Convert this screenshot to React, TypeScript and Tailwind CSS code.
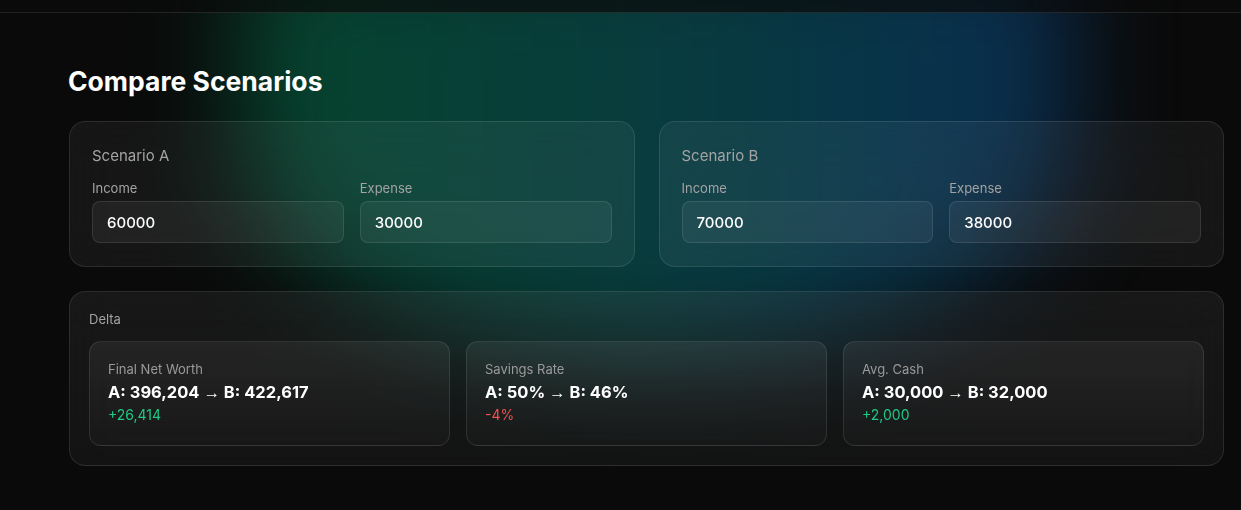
import React from 'react';

/* ── Scenario card ── */
function ScenarioCard({ title, income, expense }: { title: string; income: string; expense: string }) {
  return (
    <div className="rounded-2xl border border-white/10 bg-white/[0.05] backdrop-blur-xl px-[22px] py-[23px]">
      <p className="text-[15px] leading-[22px] text-[#a3a3a3]">{title}</p>
      <div className="mt-3 grid grid-cols-2 gap-4">
        <Field label="Income" value={income} />
        <Field label="Expense" value={expense} />
      </div>
    </div>
  );
}

function Field({ label, value }: { label: string; value: string }) {
  return (
    <label className="block">
      <span className="block text-[13px] leading-[18px] text-[#a3a3a3]">{label}</span>
      <input
        readOnly
        value={value}
        className="mt-1 h-[42px] w-full rounded-lg border border-white/10 bg-white/[0.05] px-[14px] text-[15px] font-medium text-white outline-none"
      />
    </label>
  );
}

/* ── Delta stat ── */
function DeltaStat({ a, b, title, delta, positive }: {
  a: string; b: string; title: string; delta: string; positive: boolean;
}) {
  return (
    <div className="rounded-xl border border-white/10 bg-gradient-to-b from-white/[0.06] to-white/[0.02] px-[18px] pt-[19px] pb-5">
      <p className="text-[13px] leading-4 text-[#9a9a9a]">{title}</p>
      <p className="mt-[3px] text-[16.5px] leading-6 font-bold text-white">
        {a} <span className="font-normal" style={{ fontFamily: '"Liberation Sans", sans-serif' }}>→</span> {b}
      </p>
      <p className={positive ? 'mt-px text-[14px] leading-5 text-[#20c985]' : 'mt-px text-[14px] leading-5 text-[#f05252]'}>
        {delta}
      </p>
    </div>
  );
}

export default function App() {
  return (
    <div
      className="relative min-h-[510px] overflow-hidden bg-[#0a0a0a] text-white"
      style={{ fontFamily: 'Inter, "Noto Sans", sans-serif' }}
    >
      {/* background glow */}
      <div className="pointer-events-none absolute left-[240px] top-[-60px] h-[410px] w-[830px] rounded-b-[50%] bg-gradient-to-r from-[#064a30] via-[#084244] to-[#0b3058] opacity-90 blur-[50px]" />

      {/* top bar */}
      <div className="relative h-[13px] border-b border-white/10 bg-[#0a0a0a]/70" />

      <div className="relative pl-[69px] pr-[17px] pt-[52px] pb-10">
        <h1 className="-ml-px text-[26.5px] leading-8 font-bold text-white">Compare Scenarios</h1>

        <div className="mt-[24px] grid grid-cols-2 gap-6">
          <ScenarioCard title="Scenario A" income="60000" expense="30000" />
          <ScenarioCard title="Scenario B" income="70000" expense="38000" />
        </div>

        <div className="mt-6 rounded-2xl border border-white/10 bg-gradient-to-b from-white/[0.06] to-white/[0.04] backdrop-blur-xl px-[19px] pt-[19px] pb-[19px]">
          <p className="text-[13px] leading-4 text-[#a3a3a3]">Delta</p>
          <div className="mt-[14px] grid grid-cols-3 gap-4">
            <DeltaStat title="Final Net Worth" a="A: 396,204" b="B: 422,617" delta="+26,414" positive />
            <DeltaStat title="Savings Rate" a="A: 50%" b="B: 46%" delta="-4%" positive={false} />
            <DeltaStat title="Avg. Cash" a="A: 30,000" b="B: 32,000" delta="+2,000" positive />
          </div>
        </div>
      </div>
    </div>
  );
}
